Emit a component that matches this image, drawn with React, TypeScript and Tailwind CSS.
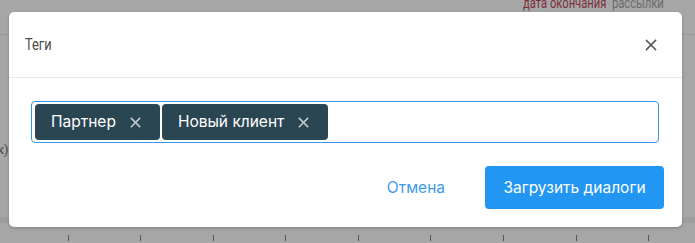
import React from "react";

function XIcon({ className }: { className?: string }) {
  return (
    <svg viewBox="0 0 12 12" className={className} fill="none" stroke="currentColor" strokeWidth={1.6} strokeLinecap="square">
      <path d="M1.5 1.5 L10.5 10.5 M10.5 1.5 L1.5 10.5" />
    </svg>
  );
}

function Chip({ label }: { label: string }) {
  return (
    <div className="flex h-[36px] items-center rounded-[4px] bg-[#2b4653] pl-[16px] pr-[19px] text-[15.5px] text-white">
      <span>{label}</span>
      <XIcon className="ml-[14px] h-[11px] w-[11px] text-[#c3ccd1]" />
    </div>
  );
}

export default function App() {
  const ticks = [68, 140, 213, 285, 358, 430, 503, 576, 648];
  return (
    <div
      className="relative h-[243px] w-[695px] overflow-hidden bg-[#a6a6a6]"
      style={{ fontFamily: "Inter, 'Noto Sans', sans-serif" }}
    >
      {/* background page, dimmed */}
      <div className="absolute left-0 right-0 top-[34px] h-px bg-[#999]" />
      <div className="absolute left-0 right-0 top-[217px] h-[6px] bg-[#9d9d9d]" />
      <div
        className="absolute left-[523px] top-[-7px] origin-left scale-x-[0.8] whitespace-nowrap text-[14px] text-[#7a2d3a]"
        style={{ fontFamily: "Roboto, sans-serif" }}
      >
        дата окончания<span className="ml-[7px] text-[#6b6b6b]">рассылки</span>
      </div>
      <div
        className="absolute left-[-3px] top-[140px] whitespace-nowrap text-[13px] text-[#444]"
        style={{ fontFamily: "Roboto, sans-serif" }}
      >
        к)
      </div>
      {ticks.map((x) => (
        <div key={x} className="absolute top-[235px] h-[6px] w-px bg-[#555]" style={{ left: x }} />
      ))}

      {/* modal */}
      <div className="absolute left-[9px] top-[12px] flex h-[215px] w-[673px] flex-col rounded-[5px] bg-white shadow-[0_1px_3px_rgba(0,0,0,0.25)]">
        <div className="flex h-[65px] items-center justify-between pl-[16px] pr-[25px]">
          <span
            className="inline-block origin-left scale-x-[0.8] text-[16px] text-[#4a4a4a]"
            style={{ fontFamily: "Roboto, sans-serif" }}
          >
            Теги
          </span>
          <XIcon className="h-[12px] w-[12px] text-[#555]" />
        </div>
        <div className="h-px bg-[#e8e8ec]" />
        <div className="pl-[22px] pr-[23px] pt-[23px]">
          <div className="flex h-[42px] items-center gap-[2px] rounded-[4px] border border-[#3a93e6] px-[3px]">
            <Chip label="Партнер" />
            <Chip label="Новый клиент" />
          </div>
        </div>
        <div className="flex items-center justify-end pr-[18px] pt-[23px]">
          <span className="mr-[40px] text-[15.5px] text-[#3e9be9]">Отмена</span>
          <button className="h-[43px] w-[179px] rounded-[4px] bg-[#2196f3] text-[15.5px] text-white">
            Загрузить диалоги
          </button>
        </div>
      </div>
    </div>
  );
}
